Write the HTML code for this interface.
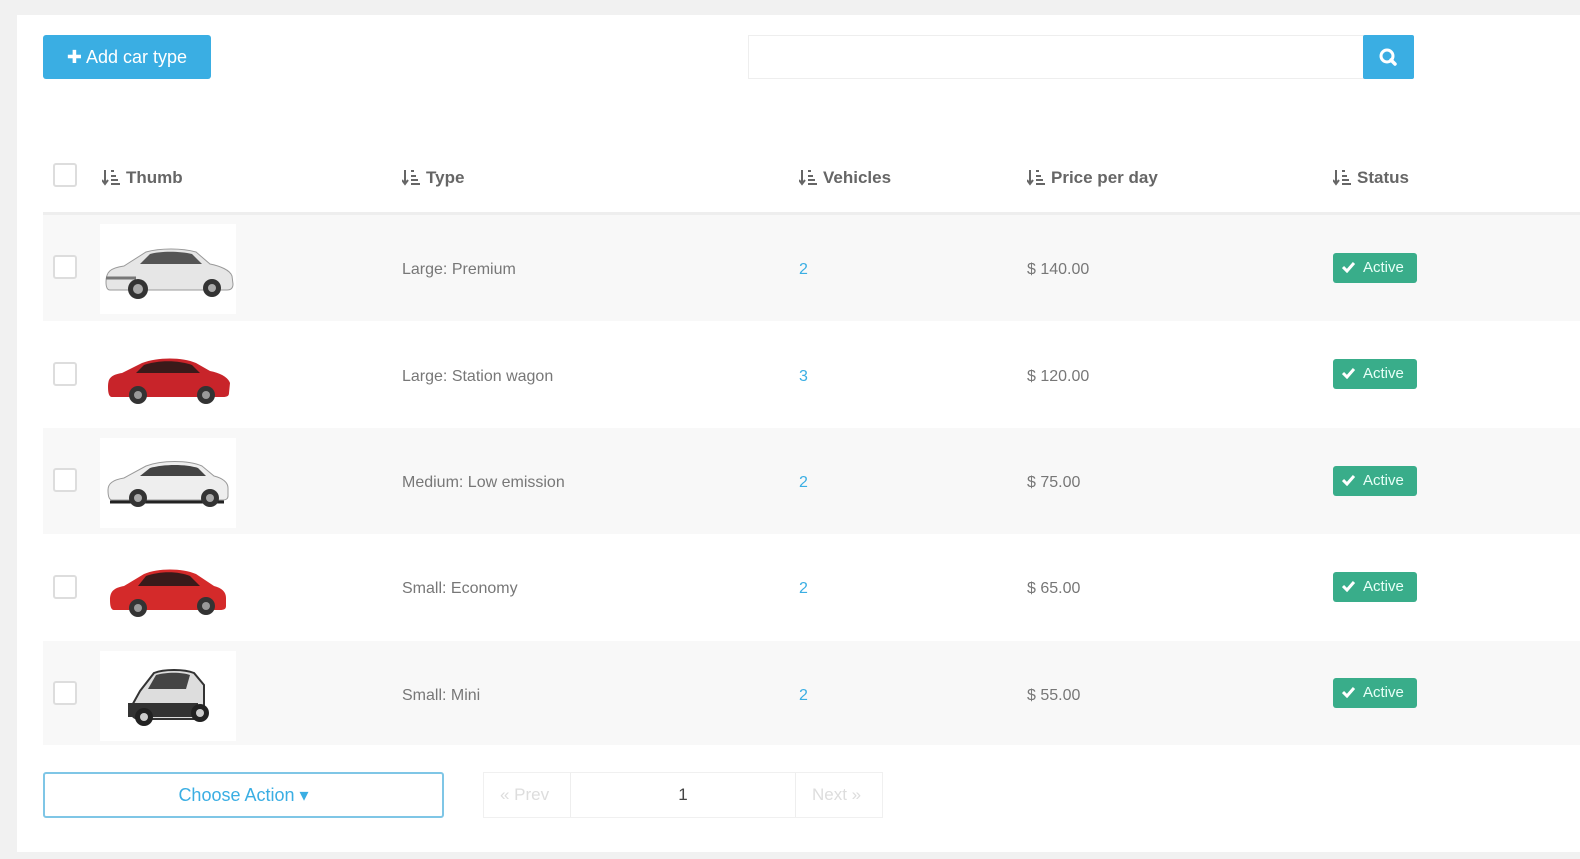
<!DOCTYPE html>
<html><head><meta charset="utf-8"><style>
*{margin:0;padding:0;box-sizing:border-box}
body{width:1580px;height:859px;background:#f1f1f1;font-family:"Liberation Sans",sans-serif;position:relative;overflow:hidden}
.panel{position:absolute;left:17px;top:15px;width:1563px;height:837px;background:#fff}
.abs{position:absolute}
.btn{left:43px;top:35px;width:168px;height:44px;background:#3aaee3;border-radius:3px;color:#fff;font-size:18px;line-height:44px;text-align:center}
.search{left:748px;top:35px;width:616px;height:44px;border:1px solid #eee;background:#fff}
.sbtn{left:1363px;top:35px;width:51px;height:44px;background:#3aaee3;border-radius:2px}
.hd{top:167px;font-size:17px;font-weight:bold;color:#666;line-height:22px}
.hd svg{vertical-align:-3px;margin-right:6px}
.hline{left:43px;top:212px;width:1537px;height:3px;background:#eee}
.row{left:43px;width:1537px;height:106px}
.cb{width:24px;height:24px;border:2px solid #ddd;border-radius:3px;background:#fff}
.thumb{left:100px;width:136px;height:90px;background:#fff}
.txt{font-size:16px;color:#777}
.num{font-size:16px;color:#3aaee3}
.badge{left:1333px;width:84px;height:30px;background:#39ad8a;border-radius:3px;color:#e8fff7;font-size:15px;line-height:30px;padding-left:30px}
.badge svg{position:absolute;left:9px;top:9px}
</style></head><body>
<div class="panel"></div>
<div class="abs btn">✚ Add car type</div>
<div class="abs search"></div>
<div class="abs sbtn"><svg width="51" height="44"><circle cx="24" cy="21" r="6" fill="none" stroke="#fff" stroke-width="3"/><line x1="28" y1="25" x2="32" y2="29" stroke="#fff" stroke-width="3.5" stroke-linecap="round"/></svg></div>

<div class="abs cb" style="left:53px;top:163px"></div>
<div class="abs hd" style="left:102px"><svg width="18" height="18"><path d="M3 2v13M0 12l3 4 3-4" stroke="#666" stroke-width="2" fill="none"/><path d="M9 3h3M9 8h5M9 12h7M9 16h9" stroke="#666" stroke-width="2"/></svg>Thumb</div>
<div class="abs hd" style="left:402px"><svg width="18" height="18"><path d="M3 2v13M0 12l3 4 3-4" stroke="#666" stroke-width="2" fill="none"/><path d="M9 3h3M9 8h5M9 12h7M9 16h9" stroke="#666" stroke-width="2"/></svg>Type</div>
<div class="abs hd" style="left:799px"><svg width="18" height="18"><path d="M3 2v13M0 12l3 4 3-4" stroke="#666" stroke-width="2" fill="none"/><path d="M9 3h3M9 8h5M9 12h7M9 16h9" stroke="#666" stroke-width="2"/></svg>Vehicles</div>
<div class="abs hd" style="left:1027px"><svg width="18" height="18"><path d="M3 2v13M0 12l3 4 3-4" stroke="#666" stroke-width="2" fill="none"/><path d="M9 3h3M9 8h5M9 12h7M9 16h9" stroke="#666" stroke-width="2"/></svg>Price per day</div>
<div class="abs hd" style="left:1333px"><svg width="18" height="18"><path d="M3 2v13M0 12l3 4 3-4" stroke="#666" stroke-width="2" fill="none"/><path d="M9 3h3M9 8h5M9 12h7M9 16h9" stroke="#666" stroke-width="2"/></svg>Status</div>
<div class="abs hline"></div>

<div class="abs row" style="top:215px;background:#f8f8f8"></div>
<div class="abs row" style="top:322px;background:#fff"></div>
<div class="abs row" style="top:428px;background:#f8f8f8"></div>
<div class="abs row" style="top:535px;background:#fff"></div>
<div class="abs row" style="top:641px;background:#f8f8f8;height:104px"></div>

<div class="abs cb" style="left:53px;top:255px"></div>
<div class="abs thumb" style="top:224px"><svg width="136" height="90" viewBox="0 0 136 90"><path d="M6 58c0-10 4-14 18-16l22-14c14-4 36-4 50 0l14 12c10 2 20 6 22 12l1 8c0 4-2 6-6 6H10c-3 0-4-3-4-8z" fill="#e6e6e6" stroke="#999"/><path d="M50 30c10-3 30-3 42 0l10 10H40z" fill="#555"/><path d="M6 54h30" stroke="#777" stroke-width="3"/><circle cx="38" cy="65" r="10" fill="#333"/><circle cx="38" cy="65" r="5" fill="#aaa"/><circle cx="112" cy="64" r="9" fill="#333"/><circle cx="112" cy="64" r="4" fill="#aaa"/></svg></div>
<div class="abs txt" style="left:402px;top:261px">Large: Premium</div>
<div class="abs num" style="left:799px;top:261px">2</div>
<div class="abs txt" style="left:1027px;top:261px">$ 140.00</div>
<div class="abs badge" style="top:253px"><svg width="13" height="11"><path d="M1 5l4 4 7-8" stroke="#fff" stroke-width="3" fill="none"/></svg>Active</div>

<div class="abs cb" style="left:53px;top:362px"></div>
<div class="abs thumb" style="top:331px"><svg width="136" height="90" viewBox="0 0 136 90"><path d="M8 56c0-8 2-12 14-14l20-10c16-6 40-6 54 0l14 8c10 2 18 6 20 12l-1 10c0 3-2 4-6 4H12c-3 0-4-4-4-10z" fill="#c8242a"/><path d="M44 34c14-5 34-5 48 0l8 8H36z" fill="#3a1a1a"/><circle cx="38" cy="64" r="9" fill="#333"/><circle cx="38" cy="64" r="4" fill="#999"/><circle cx="106" cy="64" r="9" fill="#333"/><circle cx="106" cy="64" r="4" fill="#999"/></svg></div>
<div class="abs txt" style="left:402px;top:368px">Large: Station wagon</div>
<div class="abs num" style="left:799px;top:368px">3</div>
<div class="abs txt" style="left:1027px;top:368px">$ 120.00</div>
<div class="abs badge" style="top:359px"><svg width="13" height="11"><path d="M1 5l4 4 7-8" stroke="#fff" stroke-width="3" fill="none"/></svg>Active</div>

<div class="abs cb" style="left:53px;top:468px"></div>
<div class="abs thumb" style="top:438px"><svg width="136" height="90" viewBox="0 0 136 90"><path d="M8 52c0-6 4-10 16-12l22-12c16-6 42-6 56 0l12 10c8 2 14 6 14 12v8c0 3-2 4-6 4H12c-3 0-4-4-4-10z" fill="#eee" stroke="#999"/><path d="M50 30c14-4 36-4 48 0l8 8H40z" fill="#444"/><path d="M10 64h114" stroke="#222" stroke-width="3"/><circle cx="38" cy="60" r="9" fill="#333"/><circle cx="38" cy="60" r="4" fill="#aaa"/><circle cx="110" cy="60" r="9" fill="#333"/><circle cx="110" cy="60" r="4" fill="#aaa"/></svg></div>
<div class="abs txt" style="left:402px;top:474px">Medium: Low emission</div>
<div class="abs num" style="left:799px;top:474px">2</div>
<div class="abs txt" style="left:1027px;top:474px">$ 75.00</div>
<div class="abs badge" style="top:466px"><svg width="13" height="11"><path d="M1 5l4 4 7-8" stroke="#fff" stroke-width="3" fill="none"/></svg>Active</div>

<div class="abs cb" style="left:53px;top:575px"></div>
<div class="abs thumb" style="top:544px"><svg width="136" height="90" viewBox="0 0 136 90"><path d="M10 56c0-8 3-12 14-14l20-12c14-6 38-6 52 0l18 12c8 2 12 6 12 12v8c0 3-2 4-6 4H14c-3 0-4-4-4-10z" fill="#d42a2a"/><path d="M46 32c14-5 32-5 44 0l10 10H38z" fill="#3a1a1a"/><circle cx="38" cy="64" r="9" fill="#333"/><circle cx="38" cy="64" r="4" fill="#999"/><circle cx="106" cy="62" r="9" fill="#333"/><circle cx="106" cy="62" r="4" fill="#999"/></svg></div>
<div class="abs txt" style="left:402px;top:580px">Small: Economy</div>
<div class="abs num" style="left:799px;top:580px">2</div>
<div class="abs txt" style="left:1027px;top:580px">$ 65.00</div>
<div class="abs badge" style="top:572px"><svg width="13" height="11"><path d="M1 5l4 4 7-8" stroke="#fff" stroke-width="3" fill="none"/></svg>Active</div>

<div class="abs cb" style="left:53px;top:681px"></div>
<div class="abs thumb" style="top:651px"><svg width="136" height="90" viewBox="0 0 136 90"><path d="M40 40l14-18c10-4 30-4 40 0l10 12v26c0 6-4 8-10 8H40c-6 0-10-4-10-10z" fill="#ddd" stroke="#333" stroke-width="2"/><path d="M56 24c10-3 26-3 34 0l-4 14H48z" fill="#444"/><path d="M28 52h70v14H28z" fill="#333"/><circle cx="44" cy="66" r="9" fill="#222"/><circle cx="44" cy="66" r="4" fill="#ccc"/><circle cx="100" cy="62" r="9" fill="#222"/><circle cx="100" cy="62" r="4" fill="#ccc"/></svg></div>
<div class="abs txt" style="left:402px;top:687px">Small: Mini</div>
<div class="abs num" style="left:799px;top:687px">2</div>
<div class="abs txt" style="left:1027px;top:687px">$ 55.00</div>
<div class="abs badge" style="top:678px"><svg width="13" height="11"><path d="M1 5l4 4 7-8" stroke="#fff" stroke-width="3" fill="none"/></svg>Active</div>

<div class="abs" style="left:43px;top:772px;width:401px;height:46px;border:2px solid #7fc6e6;border-radius:3px;color:#3aaee3;font-size:18px;line-height:42px;text-align:center">Choose Action ▾</div>
<div class="abs" style="left:483px;top:772px;width:400px;height:46px;border:1px solid #f0f0f0;background:#fff"></div>
<div class="abs" style="left:570px;top:773px;width:226px;height:44px;border-left:1px solid #eee;border-right:1px solid #eee;text-align:center;line-height:44px;font-size:17px;color:#444">1</div>
<div class="abs" style="left:500px;top:785px;font-size:17px;color:#ddd">« Prev</div>
<div class="abs" style="left:812px;top:785px;font-size:17px;color:#ddd">Next »</div>
</body></html>
